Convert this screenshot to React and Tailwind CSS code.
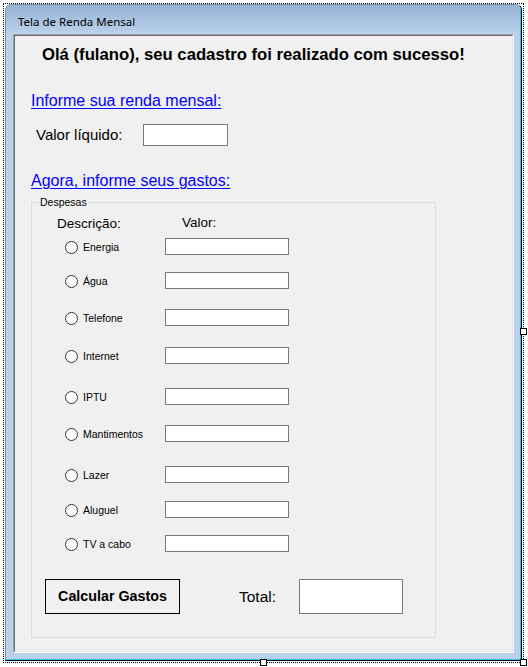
import React from 'react';

// Itens do groupbox "Despesas" (espaçamento irregular, igual ao designer)
const despesas = [
  { nome: 'Energia', mt: 'mt-[6px]' },
  { nome: 'Água', mt: 'mt-[17px]' },
  { nome: 'Telefone', mt: 'mt-[20px]' },
  { nome: 'Internet', mt: 'mt-[21px]' },
  { nome: 'IPTU', mt: 'mt-[24px]' },
  { nome: 'Mantimentos', mt: 'mt-[20px]' },
  { nome: 'Lazer', mt: 'mt-[24px]' },
  { nome: 'Aluguel', mt: 'mt-[18px]' },
  { nome: 'TV a cabo', mt: 'mt-[17px]' },
];

const Handle = ({ className }) => (
  <div className={`absolute w-[7px] h-[7px] bg-white border border-black ${className}`} />
);

const Radio = ({ label }) => (
  <div className="flex items-center mt-[2px]">
    <div className="ml-[33px] w-[13px] h-[13px] rounded-full border border-[#333333] bg-white" />
    <span className="ml-[5px] w-[82px] text-[10.5px] leading-[13px] text-black">{label}</span>
  </div>
);

export default function App() {
  return (
    <div
      className="relative w-[528px] h-[667px] bg-white px-[3px] pt-[3px]"
      style={{ fontFamily: '"Liberation Sans", Arial, sans-serif' }}
    >
      {/* Borda de seleção do designer */}
      <div className="w-[521px] border border-dotted border-black pl-[1px] pr-[1px] pb-[1px]">
        {/* Janela */}
        <div className="w-[517px] rounded-t-[6px] border border-[#7a8da5] border-r-black border-b-black bg-[#b9d1ea]">
          <div className="border-r border-b border-[#2ec5f0] rounded-t-[5px] overflow-hidden">
            {/* Barra de título */}
            <div className="h-[29px] pt-[9px] pl-[12px] bg-gradient-to-b from-[#96b2d4] to-[#bad2eb]">
              <span
                className="block text-[11.5px] leading-[16px] text-black"
                style={{ fontFamily: '"Noto Sans", "Open Sans", sans-serif' }}
              >
                Tela de Renda Mensal
              </span>
            </div>

            {/* Moldura + área cliente */}
            <div className="pl-[7px] pr-[6px] pb-[6px]">
              <div className="w-[501px] h-[619px] border border-[#a0a0a0] border-r-white border-b-white">
                <div className="h-full border border-[#696969] border-r-[#e3e3e3] border-b-[#e3e3e3] bg-[#f0f0f0] flex flex-col">
                  <h1 className="mt-[9px] pl-[27px] text-[16.7px] leading-[20px] font-bold text-black">
                    Olá (fulano), seu cadastro foi realizado com sucesso!
                  </h1>

                  <a className="mt-[26px] ml-[16px] w-fit text-[16px] leading-[20px] text-[#0000ff] underline underline-offset-[2px]">
                    Informe sua renda mensal:
                  </a>

                  <div className="mt-[13px] ml-[21px] flex items-center h-[22px]">
                    <span className="w-[107px] text-[15px] leading-[22px] text-black">Valor líquido:</span>
                    <div className="w-[85px] h-[22px] bg-white border border-[#7a7a7a]" />
                  </div>

                  <a className="mt-[25px] ml-[16px] w-fit text-[16px] leading-[20px] text-[#0000ff] underline underline-offset-[2px]">
                    Agora, informe seus gastos:
                  </a>

                  {/* GroupBox Despesas */}
                  <div className="mt-[11px] ml-[16px] w-[405px] h-[436px] border border-[#dcdcdc] flex flex-col">
                    <span className="-mt-[7px] ml-[7px] px-[1px] w-fit bg-[#f0f0f0] text-[10.5px] leading-[12px] text-black">
                      Despesas
                    </span>

                    <div className="mt-[8px] pl-[25px] flex h-[16px] text-[13.5px] leading-[16px] text-black">
                      <span className="w-[125px]">Descrição:</span>
                      <span className="-mt-[1px]">Valor:</span>
                    </div>

                    {despesas.map((d) => (
                      <div key={d.nome} className={`${d.mt} flex items-center h-[17px]`}>
                        <Radio label={d.nome} />
                        <div className="w-[124px] h-[17px] bg-white border border-[#7a7a7a]" />
                      </div>
                    ))}

                    <div className="mt-[27px] ml-[13px] flex items-center h-[35px]">
                      <button className="w-[135px] h-[35px] border border-black bg-[#f0f0f0] text-[14.3px] font-bold text-black">
                        Calcular Gastos
                      </button>
                      <span className="ml-[59px] w-[60px] text-[15.5px] leading-[20px] text-black">Total:</span>
                      <div className="w-[104px] h-[35px] bg-white border border-[#7a7a7a]" />
                    </div>
                  </div>
                </div>
              </div>
            </div>
          </div>
        </div>
      </div>

      {/* Alças de redimensionamento */}
      <Handle className="left-[520px] top-[328px]" />
      <Handle className="left-[260px] top-[659px]" />
      <Handle className="left-[520px] top-[659px]" />
    </div>
  );
}
